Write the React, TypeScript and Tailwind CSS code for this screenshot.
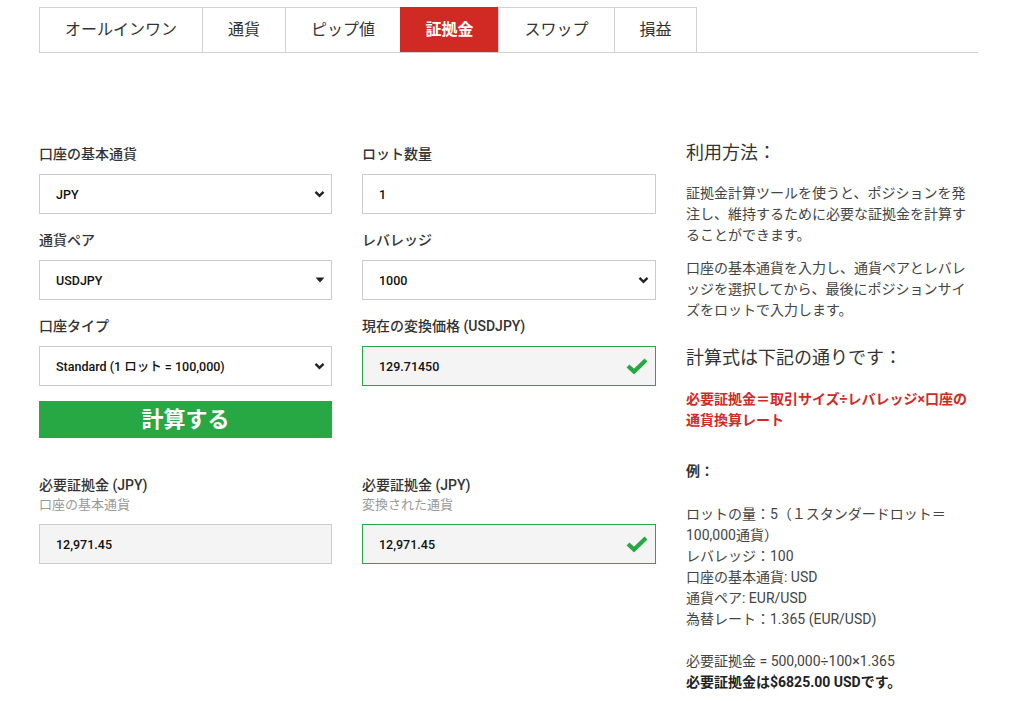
import React from "react";

const FONT = { fontFamily: 'Roboto, "Noto Sans CJK JP", sans-serif' };

function Chevron() {
  return (
    <svg width="11" height="8" viewBox="0 0 11 8" className="absolute right-[4px] top-1/2 -translate-y-1/2 mr-[0px]">
      <path d="M1.5 1.8 L5.5 5.8 L9.5 1.8" fill="none" stroke="#222" strokeWidth="2.4" />
    </svg>
  );
}

function Triangle() {
  return (
    <svg width="10" height="6" viewBox="0 0 10 6" className="absolute right-[4px] top-1/2 -translate-y-1/2">
      <path d="M0.5 0.5 L9.5 0.5 L5 5.5 Z" fill="#222" />
    </svg>
  );
}

function Check() {
  return (
    <svg width="22" height="17" viewBox="0 0 22 17" className="absolute right-[7px] top-1/2 -translate-y-1/2">
      <path d="M2 8.5 L8 14 L20 2.5" fill="none" stroke="#28a745" strokeWidth="4.2" strokeLinejoin="miter" />
    </svg>
  );
}

function Label({ children }: { children: React.ReactNode }) {
  return <div className="text-[14px] leading-[20px] font-medium text-[#333] mb-[10px]">{children}</div>;
}

function Box({
  children,
  icon,
  variant = "white",
}: {
  children: React.ReactNode;
  icon?: "chev" | "tri" | "check";
  variant?: "white" | "gray" | "green";
}) {
  const cls =
    variant === "white"
      ? "bg-white border-[#cccccc]"
      : variant === "gray"
      ? "bg-[#f4f4f4] border-[#cccccc]"
      : "bg-[#f4f4f4] border-[#28a745]";
  return (
    <div className={`relative h-[40px] border ${cls} flex items-center pl-[16px] pr-[8px]`}>
      <span className="text-[12.5px] font-medium text-[#111] translate-y-[1px]">{children}</span>
      {icon === "chev" && <div className="absolute right-[2px] top-0 bottom-0 w-[14px]"><Chevron /></div>}
      {icon === "tri" && <div className="absolute right-[2px] top-0 bottom-0 w-[14px]"><Triangle /></div>}
      {icon === "check" && <Check />}
    </div>
  );
}

function Field({
  label,
  value,
  icon,
  variant,
}: {
  label: string;
  value: string;
  icon?: "chev" | "tri" | "check";
  variant?: "white" | "gray" | "green";
}) {
  return (
    <div className="mb-[16px]">
      <Label>{label}</Label>
      <Box icon={icon} variant={variant}>
        {value}
      </Box>
    </div>
  );
}

function Result({ sub, green }: { sub: string; green?: boolean }) {
  return (
    <div>
      <div className="text-[14px] leading-[19px] font-medium text-[#333]">必要証拠金 (JPY)</div>
      <div className="text-[13px] leading-[19px] text-[#999] mb-[10px]">{sub}</div>
      <Box variant={green ? "green" : "gray"} icon={green ? "check" : undefined}>
        12,971.45
      </Box>
    </div>
  );
}

const tabs = [
  { t: "オールインワン", w: 163 },
  { t: "通貨", w: 83 },
  { t: "ピップ値", w: 115 },
  { t: "証拠金", w: 98, active: true },
  { t: "スワップ", w: 116 },
  { t: "損益", w: 83 },
];

export default function App() {
  return (
    <div className="w-[1020px] h-[701px] bg-white overflow-hidden" style={FONT}>
      <div className="pl-[39px] pt-[7px] w-[978px] box-content">
        {/* Tabs */}
        <div className="flex border-b border-[#d0d0d0] w-[939px]">
          {tabs.map((tab, i) => (
            <div
              key={tab.t}
              style={{ width: tab.w }}
              className={`h-[45px] flex items-center justify-center text-[16px] border-t border-l border-[#d0d0d0] ${
                i === tabs.length - 1 ? "border-r" : ""
              } ${tab.active ? "bg-[#d12a25] text-white font-bold border-[#d12a25]" : "text-[#333]"}`}
            >
              {tab.t}
            </div>
          ))}
        </div>

        {/* Content */}
        <div className="grid grid-cols-[293px_294px_292px] gap-x-[30px] mt-[91px]">
          {/* Left column */}
          <div>
            <Field label="口座の基本通貨" value="JPY" icon="chev" />
            <Field label="通貨ペア" value="USDJPY" icon="tri" />
            <div>
              <Label>口座タイプ</Label>
              <Box icon="chev">Standard (1 ロット = 100,000)</Box>
            </div>
            <button className="mt-[15px] w-full h-[37px] bg-[#28a745] text-white text-[22px] font-bold flex items-center justify-center">
              計算する
            </button>
            <div className="mt-[38px]">
              <Result sub="口座の基本通貨" />
            </div>
          </div>

          {/* Middle column */}
          <div>
            <Field label="ロット数量" value="1" />
            <Field label="レバレッジ" value="1000" icon="chev" />
            <div>
              <Label>現在の変換価格 (USDJPY)</Label>
              <Box variant="green" icon="check">
                129.71450
              </Box>
            </div>
            <div className="mt-[90px]">
              <Result sub="変換された通貨" green />
            </div>
          </div>

          {/* Right column */}
          <div className="text-[#444] text-[14px] leading-[21px] -mt-[2px]">
            <div className="text-[18px] leading-[22px] text-[#333] mb-[19px]">利用方法：</div>
            <p>
              証拠金計算ツールを使うと、ポジションを発
              <br />
              注し、維持するために必要な証拠金を計算す
              <br />
              ることができます。
            </p>
            <p className="mt-[12px]">
              口座の基本通貨を入力し、通貨ペアとレバレ
              <br />
              ッジを選択してから、最後にポジションサイ
              <br />
              ズをロットで入力します。
            </p>
            <div className="text-[18px] leading-[22px] text-[#333] mt-[26px] mb-[20px]">計算式は下記の通りです：</div>
            <p className="text-[#d12a25] font-bold">
              必要証拠金＝取引サイズ÷レバレッジ×口座の
              <br />
              通貨換算レート
            </p>
            <p className="font-bold text-[#333] mt-[30px]">例：</p>
            <p className="mt-[22px]">
              ロットの量：5（１スタンダードロット＝
              <br />
              100,000通貨）
              <br />
              レバレッジ：100
              <br />
              口座の基本通貨: USD
              <br />
              通貨ペア: EUR/USD
              <br />
              為替レート：1.365 (EUR/USD)
              <br />
              <br />
              必要証拠金 = 500,000÷100×1.365
              <br />
              <b className="text-[#222]">必要証拠金は$6825.00 USDです。</b>
            </p>
          </div>
        </div>
      </div>
    </div>
  );
}
